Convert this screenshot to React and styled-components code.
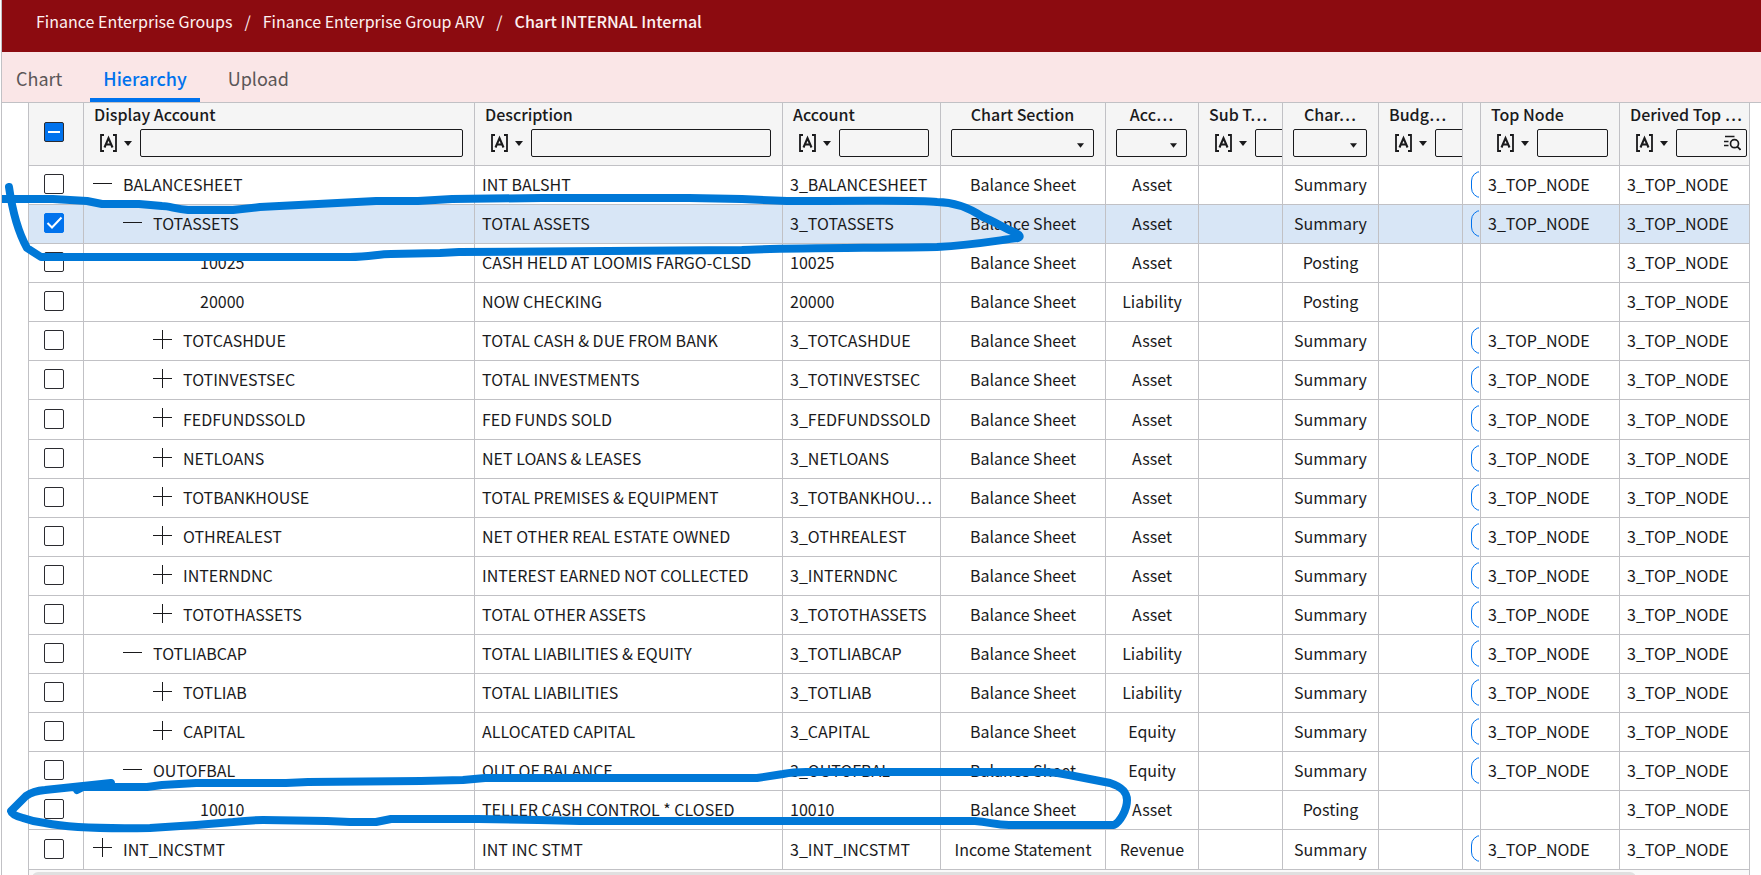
import React from "react";
import styled, { createGlobalStyle, css } from "styled-components";

const GlobalStyle = createGlobalStyle`
  *, *::before, *::after { box-sizing: border-box; }
  body {
    margin: 0;
    background: #fff;
    color: #1a1a1c;
    font-family: "Noto Sans CJK KR", "Noto Sans", sans-serif;
    font-size: 16px;
    line-height: 20px;
  }
  button, input, select { font: inherit; color: inherit; }
`;

const LINE = "#c1c1c5";
const BLUE = "#0072ed";

const Page = styled.div`
  position: relative;
  height: 100vh;
  display: flex;
  flex-direction: column;
  overflow: hidden;
  border-left: 1px solid ${LINE};
  margin-left: 1px;
`;

const Header = styled.header`
  flex: none;
  height: 52px;
  padding: 11px 34px;
  background: #8c0b10;
  color: #fdf1f1;
`;

const Crumbs = styled.nav`
  display: flex;
  gap: 12px;
`;

const Crumb = styled.a`
  color: inherit;
  text-decoration: none;
  font-weight: ${(p) => (p.$current ? 500 : 400)};
`;

const Slash = styled.span`
  font-weight: 400;
`;

const Tabs = styled.nav`
  flex: none;
  display: flex;
  align-items: stretch;
  height: 51px;
  padding-left: 1px;
  background: #fae6e7;
  border-bottom: 1px solid ${LINE};
`;

const Tab = styled.button`
  border: 0;
  border-bottom: 4px solid ${(p) => (p.$active ? BLUE : "transparent")};
  background: none;
  padding: 6px 13px 0;
  margin-right: 15px;
  font-size: 18px;
  font-weight: ${(p) => (p.$active ? 500 : 400)};
  color: ${(p) => (p.$active ? BLUE : "#5b5657")};
`;

const Grid = styled.main`
  margin: 0 11px 0 26px;
  border-left: 1px solid ${LINE};
  border-right: 1px solid ${LINE};
`;

const Table = styled.table`
  width: 100%;
  table-layout: fixed;
  border-collapse: separate;
  border-spacing: 0;
`;

const Col = styled.col`
  width: ${(p) => (p.$w ? `${p.$w}px` : "auto")};
`;

const cell = css`
  padding: 0 0 2px 7px;
  border-right: 1px solid ${LINE};
  border-bottom: 1px solid ${LINE};
  overflow: hidden;
  white-space: nowrap;
  text-align: left;
  &:last-child { border-right: 0; }
`;

const HeadCell = styled.th`
  ${cell}
  height: 63px;
  padding: 0 0 ${(p) => (p.$middle ? "4px" : "0")};
  background: #f5f5f5;
  font-weight: 500;
  vertical-align: ${(p) => (p.$middle ? "middle" : "top")};
`;

const HeadBody = styled.div`
  display: flex;
  flex-direction: column;
  gap: 5px;
  padding: 1px 11px 0 10px;
`;

const HeadTitle = styled.div`
  text-align: ${(p) => (p.$center ? "center" : "left")};
`;

const FilterRow = styled.div`
  display: flex;
  align-items: center;
  height: 28px;
`;

const FilterButton = styled.button`
  flex: none;
  display: flex;
  align-items: center;
  gap: 6px;
  width: 46px;
  height: 28px;
  padding: 0 0 0 4px;
  border: 0;
  background: none;
`;

const field = css`
  height: 28px;
  border: 1px solid #1a1a1c;
  border-radius: 2px;
  background: transparent;
`;

const FilterBox = styled.div`
  ${field}
  flex: 1 0 71px;
  display: flex;
  align-items: center;
  padding-right: 5px;
`;

const FilterInput = styled.input`
  flex: 1;
  min-width: 0;
  width: 0;
  height: 26px;
  padding: 0 4px;
  border: 0;
  background: none;
  outline: none;
`;

const SelectWrap = styled.div`
  flex: 1;
  display: grid;
  align-items: center;
  > * { grid-area: 1 / 1; }
  > svg { justify-self: end; margin: 4px 10px 0 0; pointer-events: none; }
`;

const FilterSelect = styled.select`
  ${field}
  appearance: none;
  width: 100%;
  padding: 0 8px;
`;

const BodyRow = styled.tr`
  background: ${(p) => (p.$selected ? "#d8e6f6" : "#fff")};
`;

const BodyCell = styled.td`
  ${cell}
  height: ${(p) => (p.$tall ? 40 : 39)}px;
  ${(p) => p.$center && css`padding-left: 0; text-align: center;`}
`;

const CheckWrap = styled.label`
  display: grid;
  padding-left: 15px;
  > * { grid-area: 1 / 1; }
  > svg { pointer-events: none; }
`;

const Check = styled.input`
  appearance: none;
  display: block;
  width: 20px;
  height: 20px;
  margin: 0;
  border: 1px solid #2b2b30;
  border-radius: 2px;
  background: #fff;
  &:checked {
    border-color: ${BLUE};
    background: ${BLUE};
  }
  &:indeterminate {
    background: ${BLUE};
  }
`;

const Node = styled.div`
  display: flex;
  align-items: center;
  gap: 11px;
  padding-left: ${(p) => p.$indent}px;
`;

const Toggle = styled.button`
  display: flex;
  width: 19px;
  height: 19px;
  padding: 0;
  border: 0;
  margin-bottom: 2px;
  background: none;
`;

const PillClip = styled.div`
  width: 8px;
  margin-left: 1px;
  overflow: hidden;
`;

const Pill = styled.button`
  display: block;
  width: 60px;
  height: 27px;
  border: 1px solid ${BLUE};
  border-radius: 10px;
  background: none;
`;

const ScrollTrack = styled.div`
  height: 20px;
  padding: 2px 113px 0 3px;
  background: #fafafa;
`;

const ScrollThumb = styled.div`
  height: 12px;
  border-radius: 6px;
  background: #e0e0e0;
`;

const Ink = styled.svg`
  position: absolute;
  top: 0;
  left: -2px;
  pointer-events: none;
  fill: none;
  stroke: #0078d7;
  stroke-width: 8;
  stroke-linecap: round;
  stroke-linejoin: round;
`;

const Caret = ({ size = 8 }) => (
  <svg width={size} height="5" viewBox="0 0 8 5">
    <path d="M0 0h8L4 5z" fill="#1a1a1c" />
  </svg>
);

const ContainsIcon = () => (
  <svg width="20" height="20" viewBox="0 0 20 20" fill="none" stroke="#1a1a1c">
    <path d="M6 2H3v16h3M15 2h3v16h-3" strokeWidth="1.8" />
    <path d="M6.500 14.500 10.500 5.200l4 9.300M8 11.500h5" strokeWidth="2.100" />
  </svg>
);

const LookupIcon = () => (
  <svg width="18" height="16" viewBox="0 0 18 16" fill="none" stroke="#1a1a1c" strokeWidth="1.700">
    <path d="M2 1.500h9.500M1 6.500h4.500M1 10.500h4.500" />
    <circle cx="11.500" cy="8.700" r="4" />
    <path d="m14.300 11.600 3.200 3.200" />
  </svg>
);

const columns = [
  { key: "display", title: "Display Account", kind: "text" },
  { key: "desc", title: "Description", kind: "text", w: 308 },
  { key: "account", title: "Account", kind: "text", w: 158 },
  { key: "section", title: "Chart Section", kind: "select", w: 165 },
  { key: "type", title: "Acc…", kind: "select", w: 93 },
  { key: "sub", title: "Sub T…", kind: "text", w: 84 },
  { key: "chart", title: "Char…", kind: "select", w: 96 },
  { key: "budget", title: "Budg…", kind: "text", w: 84 },
  { key: "pill", title: "", kind: "none", w: 18 },
  { key: "top", title: "Top Node", kind: "text", w: 139 },
  { key: "derived", title: "Derived Top …", kind: "lookup", w: 129 },
];

const BS = "Balance Sheet";
const rows = [
  [0, "-", "BALANCESHEET", "INT BALSHT", "3_BALANCESHEET", BS, "Asset"],
  [1, "-", "TOTASSETS", "TOTAL ASSETS", "3_TOTASSETS", BS, "Asset"],
  [2, "", "10025", "CASH HELD AT LOOMIS FARGO-CLSD", "10025", BS, "Asset"],
  [2, "", "20000", "NOW CHECKING", "20000", BS, "Liability"],
  [2, "+", "TOTCASHDUE", "TOTAL CASH & DUE FROM BANK", "3_TOTCASHDUE", BS, "Asset"],
  [2, "+", "TOTINVESTSEC", "TOTAL INVESTMENTS", "3_TOTINVESTSEC", BS, "Asset"],
  [2, "+", "FEDFUNDSSOLD", "FED FUNDS SOLD", "3_FEDFUNDSSOLD", BS, "Asset"],
  [2, "+", "NETLOANS", "NET LOANS & LEASES", "3_NETLOANS", BS, "Asset"],
  [2, "+", "TOTBANKHOUSE", "TOTAL PREMISES & EQUIPMENT", "3_TOTBANKHOU…", BS, "Asset"],
  [2, "+", "OTHREALEST", "NET OTHER REAL ESTATE OWNED", "3_OTHREALEST", BS, "Asset"],
  [2, "+", "INTERNDNC", "INTEREST EARNED NOT COLLECTED", "3_INTERNDNC", BS, "Asset"],
  [2, "+", "TOTOTHASSETS", "TOTAL OTHER ASSETS", "3_TOTOTHASSETS", BS, "Asset"],
  [1, "-", "TOTLIABCAP", "TOTAL LIABILITIES & EQUITY", "3_TOTLIABCAP", BS, "Liability"],
  [2, "+", "TOTLIAB", "TOTAL LIABILITIES", "3_TOTLIAB", BS, "Liability"],
  [2, "+", "CAPITAL", "ALLOCATED CAPITAL", "3_CAPITAL", BS, "Equity"],
  [1, "-", "OUTOFBAL", "OUT OF BALANCE", "3_OUTOFBAL", BS, "Equity"],
  [2, "", "10010", "TELLER CASH CONTROL * CLOSED", "10010", BS, "Asset"],
  [0, "+", "INT_INCSTMT", "INT INC STMT", "3_INT_INCSTMT", "Income Statement", "Revenue"],
];
const TALL_ROWS = ["FEDFUNDSSOLD", "INT_INCSTMT"];

function Checkbox({ label, checked, mixed }) {
  return (
    <CheckWrap>
      <Check
        type="checkbox"
        aria-label={label}
        defaultChecked={checked}
        ref={(el) => { if (el && mixed) el.indeterminate = true; }}
      />
      {(checked || mixed) && (
        <svg width="20" height="20" viewBox="0 0 20 20" fill="none" stroke="#fff" strokeWidth="2">
          <path d={mixed ? "M4 10h12" : "m3.500 10 4.500 4.500 9.500-10"} />
        </svg>
      )}
    </CheckWrap>
  );
}

function HeaderFilter({ column }) {
  if (column.kind === "select") {
    return (
      <FilterRow>
        <SelectWrap>
          <FilterSelect aria-label={`${column.title} filter`} />
          <Caret size={7} />
        </SelectWrap>
      </FilterRow>
    );
  }
  return (
    <FilterRow>
      <FilterButton type="button" aria-label={`${column.title} operator`}>
        <ContainsIcon />
        <Caret />
      </FilterButton>
      <FilterBox>
        <FilterInput type="text" aria-label={`${column.title} filter`} />
        {column.kind === "lookup" && <LookupIcon />}
      </FilterBox>
    </FilterRow>
  );
}

export default function App() {
  return (
    <>
      <GlobalStyle />
      <Page>
        <Header>
          <Crumbs aria-label="Breadcrumb">
            <Crumb href="#groups">Finance Enterprise Groups</Crumb>
            <Slash>/</Slash>
            <Crumb href="#arv">Finance Enterprise Group ARV</Crumb>
            <Slash>/</Slash>
            <Crumb href="#chart" $current>Chart INTERNAL Internal</Crumb>
          </Crumbs>
        </Header>
        <Tabs>
          <Tab type="button">Chart</Tab>
          <Tab type="button" $active>Hierarchy</Tab>
          <Tab type="button">Upload</Tab>
        </Tabs>
        <Grid>
          <Table>
            <colgroup>
              <Col $w={55} />
              {columns.map((c) => <Col key={c.key} $w={c.w} />)}
            </colgroup>
            <thead>
              <tr>
                <HeadCell $middle>
                  <Checkbox label="Select all" mixed />
                </HeadCell>
                {columns.map((c) => (
                  <HeadCell key={c.key}>
                    {c.kind !== "none" && (
                      <HeadBody>
                        <HeadTitle $center={c.kind === "select"}>{c.title}</HeadTitle>
                        <HeaderFilter column={c} />
                      </HeadBody>
                    )}
                  </HeadCell>
                ))}
              </tr>
            </thead>
            <tbody>
              {rows.map(([level, toggle, name, desc, account, section, type]) => {
                const selected = name === "TOTASSETS";
                const summary = toggle !== "";
                return (
                  <BodyRow key={name} $selected={selected}>
                    <BodyCell $center $tall={TALL_ROWS.includes(name)}>
                      <Checkbox label={`Select ${name}`} checked={selected} />
                    </BodyCell>
                    <BodyCell>
                      <Node $indent={level * 30 + (summary ? 2 : 49)}>
                        {summary && (
                          <Toggle type="button" aria-label={`Toggle ${name}`}>
                            <svg width="19" height="19" viewBox="0 0 19 19" stroke="#1a1a1c">
                              <path d="M0 9.500h19" />
                              {toggle === "+" && <path d="M9.500 0v19" />}
                            </svg>
                          </Toggle>
                        )}
                        {name}
                      </Node>
                    </BodyCell>
                    <BodyCell>{desc}</BodyCell>
                    <BodyCell>{account}</BodyCell>
                    <BodyCell $center>{section}</BodyCell>
                    <BodyCell $center>{type}</BodyCell>
                    <BodyCell />
                    <BodyCell $center>{summary ? "Summary" : "Posting"}</BodyCell>
                    <BodyCell />
                    <BodyCell>
                      {summary && <PillClip><Pill type="button" aria-label={`Open ${name}`} /></PillClip>}
                    </BodyCell>
                    <BodyCell>{summary ? "3_TOP_NODE" : ""}</BodyCell>
                    <BodyCell>3_TOP_NODE</BodyCell>
                  </BodyRow>
                );
              })}
            </tbody>
          </Table>
          <ScrollTrack><ScrollThumb /></ScrollTrack>
        </Grid>
        <Ink width="1140" height="875" viewBox="0 0 1140 875" aria-hidden="true">
          <path d="M9 187C12 208 18 232 27 248L41 257H350C370 257 378 254 391 254L440 253 459 252 742 250C768 248 890 248 937 247 975 245 1000 240 1018 238Q1022 236 1016 233C1001 227 996 222 983 217 965 205 950 202 937 202 920 200 900 201 787 201L742 199 689 198H542L452 199 418 201H376L260 207 233 210H188C175 209 170 206 162 206L139 204H102L87 201 53 199H0" />
          <path d="M111 783 45 790Q33 791 26 796L19 803 11 811Q12 815 23 818 34 822 45 823C70 828 100 829 150 828L196 825 233 822Q250 820 263 820L327 821 350 822H376L391 819H478L538 820 580 821H975C990 822 995 825 1009 825H1114C1120 822 1127 810 1127 800 1127 792 1122 787 1110 783L1069 775Q1056 772 1043 772H806Q793 772 783 774L757 778H485L463 780 421 781 308 782 286 783H196L162 785 147 787H83L77 790" />
        </Ink>
      </Page>
    </>
  );
}
